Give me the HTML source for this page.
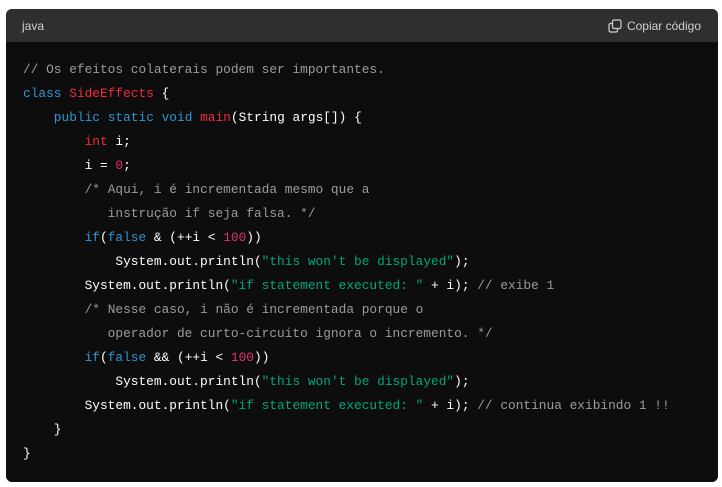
<!DOCTYPE html>
<html><head><meta charset="utf-8"><style>
body{margin:0;background:#fff;width:722px;height:487px;overflow:hidden}
.card{position:absolute;left:6px;top:9px;width:712px;height:473px;background:#0d0d0d;border-radius:6px;overflow:hidden}
.hd{height:33px;background:#2f2f2f;color:#d0d0d0;font:12px "Liberation Sans",sans-serif;position:relative}
.hd .l{position:absolute;left:16px;top:10px}
.hd .r{position:absolute;right:17px;top:10px;display:flex;align-items:center}
.hd svg{margin-right:5px}
pre{margin:0;position:absolute;left:17px;top:49px;font:12.83px/24px "Liberation Mono",monospace;color:#fff}
.c{color:#9b9b9b}.k{color:#2e95d3}.n{color:#f22c3d}.m{color:#df3079}.s{color:#00a67d}
</style></head><body>
<div class="card">
<div class="hd"><span class="l">java</span><span class="r"><svg width="14" height="14" viewBox="0 0 14 14" fill="none" stroke="#d0d0d0" stroke-width="1.2"><rect x="4.5" y="1" width="8.5" height="8.5" rx="1.5"/><path d="M4 4.5H2.5A1.5 1.5 0 0 0 1 6v5.5A1.5 1.5 0 0 0 2.5 13H8a1.5 1.5 0 0 0 1.5-1.5V10"/></svg>Copiar código</span></div>
<pre><span class="c">// Os efeitos colaterais podem ser importantes.</span>
<span class="k">class</span> <span class="n">SideEffects</span> {
    <span class="k">public</span> <span class="k">static</span> <span class="k">void</span> <span class="n">main</span>(String args[]) {
        <span class="n">int</span> i;
        i = <span class="m">0</span>;
        <span class="c">/* Aqui, i é incrementada mesmo que a
           instrução if seja falsa. */</span>
        <span class="k">if</span>(<span class="k">false</span> &amp; (++i &lt; <span class="m">100</span>))
            System.out.println(<span class="s">"this won't be displayed"</span>);
        System.out.println(<span class="s">"if statement executed: "</span> + i); <span class="c">// exibe 1</span>
        <span class="c">/* Nesse caso, i não é incrementada porque o
           operador de curto-circuito ignora o incremento. */</span>
        <span class="k">if</span>(<span class="k">false</span> &amp;&amp; (++i &lt; <span class="m">100</span>))
            System.out.println(<span class="s">"this won't be displayed"</span>);
        System.out.println(<span class="s">"if statement executed: "</span> + i); <span class="c">// continua exibindo 1 !!</span>
    }
}</pre>
</div>
</body></html>
